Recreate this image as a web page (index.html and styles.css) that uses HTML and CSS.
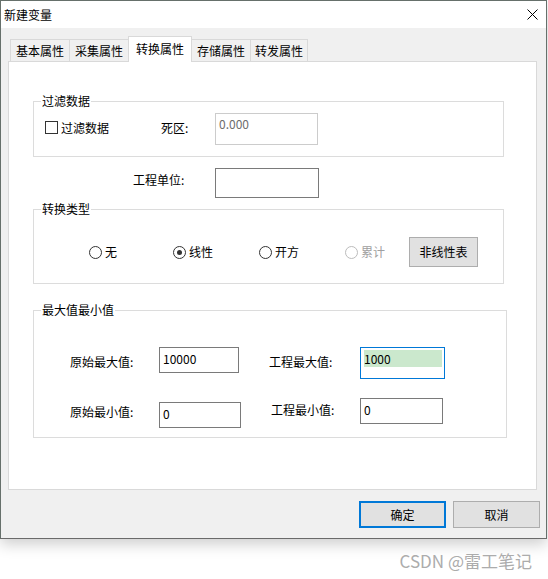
FILE: index.html
```html
<!DOCTYPE html>
<html lang="zh-CN">
<head>
<meta charset="utf-8">
<title>新建变量</title>
<link rel="stylesheet" href="styles.css">
</head>
<body>
<div class="dialog">
  <div class="titlebar">
    <span class="title">新建变量</span>
    <svg class="close" width="11" height="11" viewBox="0 0 11 11"><path d="M0.5 0.5 L10.5 10.5 M10.5 0.5 L0.5 10.5" stroke="#000" stroke-width="1" fill="none"/></svg>
  </div>
  <div class="client">
    <div class="tabs">
      <div class="tab t1">基本属性</div>
      <div class="tab t2">采集属性</div>
      <div class="tab selected">转换属性</div>
      <div class="tab t4">存储属性</div>
      <div class="tab t5">转发属性</div>
    </div>
    <div class="panel">
      <fieldset class="group g1">
        <legend>过滤数据</legend>
        <div class="filter-row">
          <span class="check"></span>
          <span class="lbl check-lbl">过滤数据</span>
          <span class="lbl dz-lbl">死区:</span>
          <div class="edit disabled dz-edit">0.000</div>
        </div>
      </fieldset>
      <div class="unit-row">
        <span class="lbl unit-lbl">工程单位:</span>
        <div class="edit unit-edit"></div>
      </div>
      <fieldset class="group g2">
        <legend>转换类型</legend>
        <div class="radio-row">
          <label class="radio-item r1"><span class="radio"></span><span>无</span></label>
          <label class="radio-item r2"><span class="radio on"><span class="dot"></span></span><span>线性</span></label>
          <label class="radio-item r3"><span class="radio"></span><span>开方</span></label>
          <label class="radio-item r4 dis"><span class="radio"></span><span>累计</span></label>
          <div class="btn nl-btn">非线性表</div>
        </div>
      </fieldset>
      <fieldset class="group g3">
        <legend>最大值最小值</legend>
        <div class="mm-row row-max">
          <span class="lbl mm-lbl">原始最大值:</span>
          <div class="edit e-rawmax">10000</div>
          <span class="lbl mm-lbl2 lmax">工程最大值:</span>
          <div class="edit focused e-engmax"><div class="sel">1000</div></div>
        </div>
        <div class="mm-row row-min">
          <span class="lbl mm-lbl lmin1">原始最小值:</span>
          <div class="edit e-rawmin">0</div>
          <span class="lbl mm-lbl2 lmin2">工程最小值:</span>
          <div class="edit e-engmin">0</div>
        </div>
      </fieldset>
    </div>
    <div class="footer">
      <div class="btn ok">确定</div>
      <div class="btn">取消</div>
    </div>
  </div>
</div>
<div class="watermark">CSDN @雷工笔记</div>
</body>
</html>
```
FILE: styles.css
```css
* { box-sizing: border-box; }
html, body { margin: 0; padding: 0; background: #fff; }
body {
  width: 548px;
  height: 579px;
  overflow: hidden;
  font-family: "Noto Sans CJK SC", "Noto Sans", sans-serif;
  font-size: 12px;
  line-height: 16px;
  color: #000;
}
.dialog {
  width: 547px;
  height: 539px;
  border: 1px solid #66706b;
  border-bottom-color: #6a6a6a;
  background: #f0f0f0;
  box-shadow: 0 5px 14px rgba(0, 0, 0, 0.2);
  display: flex;
  flex-direction: column;
}
.titlebar {
  height: 27px;
  flex: none;
  background: #fff;
  display: flex;
  align-items: center;
  justify-content: space-between;
  padding: 0 8px 0 3px;
}
.close { display: block; }
.client {
  flex: 1;
  padding: 8px 0 0 7px;
}
.tabs {
  display: flex;
  align-items: flex-end;
  height: 26px;
  margin-left: 2px;
  margin-bottom: -1px;
  position: relative;
  z-index: 1;
}
.tab {
  height: 22px;
  margin-bottom: 1px;
  border: 1px solid #d9d9d9;
  border-bottom: none;
  background: #f0f0f0;
  display: flex;
  align-items: center;
  justify-content: center;
  white-space: nowrap;
}
.tab + .tab { margin-left: -1px; }
.t1, .t2, .t4 { width: 60px; }
.t5 { width: 58px; }
.tab.selected {
  width: 64px;
  height: 26px;
  margin-bottom: 0;
  background: #fff;
  position: relative;
  z-index: 2;
  padding-bottom: 1px;
}
.panel {
  width: 529px;
  height: 429px;
  background: #fff;
  border: 1px solid #d9d9d9;
  overflow: hidden;
}
.group {
  margin: 0;
  padding: 0;
  border: 1px solid #dcdcdc;
  min-width: 0;
}
.group legend {
  padding: 0 1px;
  margin-left: 7px;
  line-height: 16px;
}
.lbl { white-space: nowrap; line-height: 16px; }
.edit {
  border: 1px solid #7a7a7a;
  background: #fff;
  padding: 3px 3px 0;
  line-height: 16px;
  white-space: nowrap;
}
.edit.disabled { border-color: #cccccc; color: #6d6d6d; padding-top: 2px; }
.edit.focused { border-color: #0078d7; padding: 2px 2px 0 3px; }
.sel { background: #cbe8cd; height: 17px; line-height: 17px; }

.g1 { margin: 31px 0 0 24px; width: 471px; padding-bottom: 11px; }
.filter-row { display: flex; align-items: flex-start; margin: 4px 0 0 11px; }
.check {
  width: 13px; height: 13px;
  border: 1px solid #333;
  background: #fff;
  margin-top: 8px;
}
.check-lbl { width: 48px; margin: 7px 0 0 3px; }
.dz-lbl { width: 54px; margin: 7px 0 0 52px; }
.dz-edit { width: 103px; height: 32px; }

.unit-row { display: flex; align-items: flex-start; margin: 11px 0 0 124px; }
.unit-lbl { width: 82px; margin-top: 4px; }
.unit-edit { width: 104px; height: 30px; }

.g2 { margin: 3px 0 0 24px; width: 471px; padding-bottom: 16px; }
.radio-row { display: flex; align-items: center; height: 30px; margin: 20px 0 0 55px; }
.radio-item { display: flex; align-items: center; }
.r1 { width: 84px; }
.r2, .r3 { width: 86px; }
.r4 { width: 64px; }
.radio {
  width: 13px; height: 13px;
  border: 1px solid #333;
  border-radius: 50%;
  background: #fff;
  margin-right: 3px;
  display: flex;
  align-items: center;
  justify-content: center;
}
.dot { width: 5px; height: 5px; border-radius: 50%; background: #333; }
.dis { color: #a0a0a0; }
.dis .radio { border-color: #bcbcbc; }
.btn {
  background: #e1e1e1;
  border: 1px solid #adadad;
  display: flex;
  align-items: center;
  justify-content: center;
  white-space: nowrap;
}
.nl-btn { width: 69px; height: 30px; }

.g3 { margin: 18px 0 0 24px; width: 474px; padding-bottom: 9px; }
.mm-row { display: flex; align-items: flex-start; margin-left: 36px; }
.row-max { margin-top: 29px; }
.row-min { margin-top: 19px; }
.mm-lbl { width: 89px; margin-top: 7px; }
.lmin1 { margin-top: 6px; }
.mm-lbl2 { margin-left: 30px; }
.lmax { width: 91px; margin-top: 7px; }
.lmin2 { width: 89px; margin-top: 4px; }
.e-rawmax { width: 80px; height: 26px; }
.e-engmax { width: 85px; height: 32px; }
.e-rawmin { width: 82px; height: 26px; margin-top: 4px; }
.e-engmin { width: 83px; height: 26px; }

.footer {
  display: flex;
  justify-content: flex-end;
  gap: 7px;
  margin: 11px 6px 0 0;
}
.footer .btn { width: 87px; height: 27px; }
.footer .btn.ok { border: 2px solid #0078d7; }

.watermark {
  width: 548px;
  text-align: right;
  padding-right: 16px;
  margin-top: 12px;
  font-size: 17px;
  line-height: 20px;
  color: #acacac;
}
```
